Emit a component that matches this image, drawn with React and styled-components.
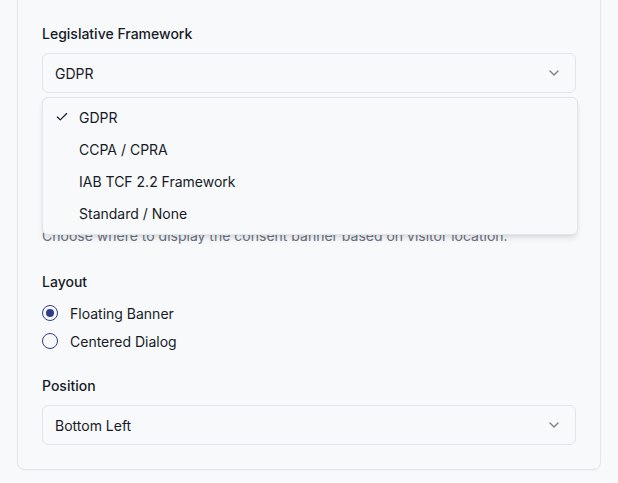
import React, { useState } from 'react';
import styled, { createGlobalStyle } from 'styled-components';
import { Check, ChevronDown } from 'lucide-react';

// --- global ---

const GlobalStyle = createGlobalStyle`
  html, body {
    margin: 0;
    padding: 0;
    background: #f8f9fb;
    font-family: Inter, 'Noto Sans', sans-serif;
    color: #161b26;
    -webkit-font-smoothing: antialiased;
  }
  * { box-sizing: border-box; }
`;

const FRAMEWORKS = ['GDPR', 'CCPA / CPRA', 'IAB TCF 2.2 Framework', 'Standard / None'];

const LAYOUTS = [
  { id: 'floating', label: 'Floating Banner' },
  { id: 'dialog', label: 'Centered Dialog' }
];

function App() {
  const [framework, setFramework] = useState('GDPR');
  const [layout, setLayout] = useState('floating');
  const [open] = useState(true);

  return (
    <>
      <GlobalStyle />
      <Page>
        <Card>
          <Field $anchor>
            <Label>Legislative Framework</Label>
            <Trigger>
              <span>{framework}</span>
              <Chevron size={16} />
            </Trigger>

            {open && (
              <Menu>
                {FRAMEWORKS.map((item) => (
                  <Option key={item} onClick={() => setFramework(item)}>
                    <CheckSlot>
                      {item === framework && <Check size={14} strokeWidth={2} />}
                    </CheckSlot>
                    {item}
                  </Option>
                ))}
              </Menu>
            )}
          </Field>

          {/* region field, mostly covered by the open menu */}
          <Field>
            <LabelSpacer />
            <RegionBox />
            <Helper>Choose where to display the consent banner based on visitor location.</Helper>
          </Field>

          <Field>
            <Label>Layout</Label>
            <RadioGroup>
              {LAYOUTS.map((l) => (
                <RadioRow key={l.id} onClick={() => setLayout(l.id)}>
                  <RadioDot $checked={layout === l.id} />
                  {l.label}
                </RadioRow>
              ))}
            </RadioGroup>
          </Field>

          <Field>
            <Label>Position</Label>
            <Trigger>
              <span>Bottom Left</span>
              <Chevron size={16} />
            </Trigger>
          </Field>
        </Card>
      </Page>
    </>
  );
}

// --- styles ---

const Page = styled.div`
  padding: 0 17px 13px;
  margin-top: -1px;
`;

const Card = styled.div`
  display: flex;
  flex-direction: column;
  gap: 24px;
  padding: 24px;
  background: #f8f9fb;
  border: 1px solid #e3e6ed;
  border-radius: 0 0 8px 8px;
  box-shadow: 0 1px 2px rgba(16, 24, 40, 0.04);
`;

const Field = styled.div`
  display: flex;
  flex-direction: column;
  gap: 9px;
  position: ${(p) => (p.$anchor ? 'relative' : 'static')};
`;

const Label = styled.div`
  font-size: 14px;
  line-height: 20px;
  font-weight: 500;
  color: #161b26;
`;

const LabelSpacer = styled.div`
  height: 20px;
`;

const Trigger = styled.div`
  height: 40px;
  display: flex;
  align-items: center;
  justify-content: space-between;
  padding: 0 13px 0 12px;
  border: 1px solid #e1e4ec;
  border-radius: 6px;
  background: #f8f9fb;
  font-size: 14px;
  color: #161b26;
`;

const Chevron = styled(ChevronDown)`
  color: #7a7f8a;
`;

const Menu = styled.div`
  position: absolute;
  top: calc(100% + 4px);
  left: 0;
  width: calc(100% + 2px);
  z-index: 10;
  padding: 3px 4px 5px;
  background: #f8f9fb;
  border: 1px solid #e1e4ec;
  border-radius: 6px;
  box-shadow: 0 4px 6px -1px rgba(0, 0, 0, 0.1), 0 2px 4px -2px rgba(0, 0, 0, 0.08);
`;

const Option = styled.div`
  height: 32px;
  display: flex;
  align-items: center;
  padding: 0 8px;
  border-radius: 4px;
  font-size: 14px;
  color: #161b26;
  cursor: default;
`;

const CheckSlot = styled.span`
  width: 24px;
  display: flex;
  align-items: center;
  color: #161b26;
`;

const RegionBox = styled.div`
  height: 72px;
  border: 1px solid #e1e4ec;
  border-radius: 6px;
`;

const Helper = styled.div`
  margin: -1px 0 2px;
  font-size: 14px;
  line-height: 20px;
  color: #6b7280;
`;

const RadioGroup = styled.div`
  display: flex;
  flex-direction: column;
  gap: 8px;
  margin: 2px 0 1px;
`;

const RadioRow = styled.label`
  display: flex;
  align-items: center;
  gap: 12px;
  height: 20px;
  font-size: 14px;
  color: #161b26;
  cursor: pointer;
`;

const RadioDot = styled.span`
  width: 16px;
  height: 16px;
  border-radius: 50%;
  border: 1px solid #2d3b8c;
  display: flex;
  align-items: center;
  justify-content: center;

  &::after {
    content: '';
    width: 8px;
    height: 8px;
    border-radius: 50%;
    background: #2d3b8c;
    display: ${(p) => (p.$checked ? 'block' : 'none')};
  }
`;

export default App;
